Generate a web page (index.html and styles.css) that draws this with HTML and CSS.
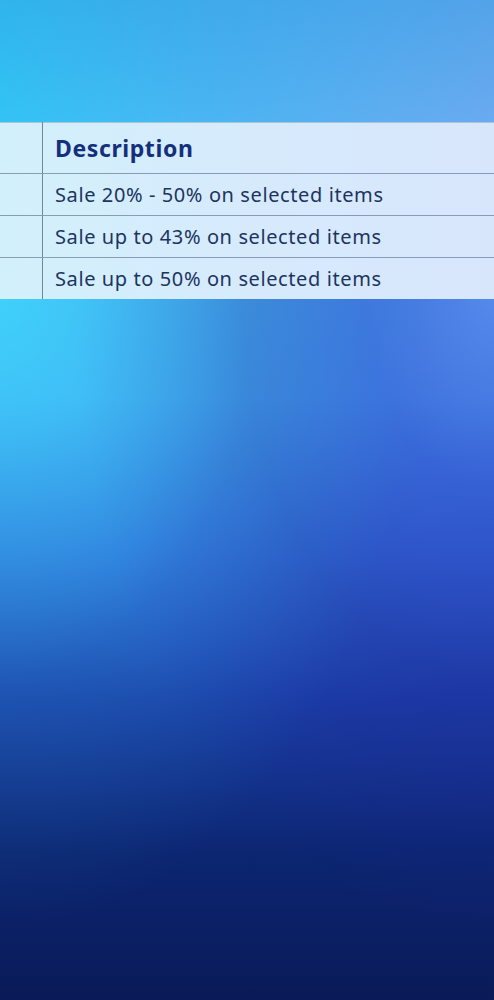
FILE: index.html
```html
<!DOCTYPE html>
<html>
<head>
  <title>Sale</title>
  <link rel="stylesheet" href="styles.css">
</head>
<body>
  <div class="hero"></div>

  <div class="table-wrap">
    <table class="deals">
      <thead>
        <tr>
          <th class="cut"></th>
          <th>Description</th>
        </tr>
      </thead>
      <tbody>
        <tr>
          <td class="cut"></td>
          <td>Sale 20% - 50% on selected items</td>
        </tr>
        <tr>
          <td class="cut"></td>
          <td>Sale up to 43% on selected items</td>
        </tr>
        <tr>
          <td class="cut"></td>
          <td>Sale up to 50% on selected items</td>
        </tr>
      </tbody>
    </table>
  </div>

  <div class="backdrop"></div>
</body>
</html>
```

FILE: styles.css
```css
html, body {
  margin: 0;
  padding: 0;
}
body {
  font-family: 'Noto Sans', Arial, sans-serif;
  background: #0a1a58;
  min-height: 1000px;
}
.hero {
  height: 122px;
  background:
    linear-gradient(180deg, rgba(40,150,220,0.35) 0%, rgba(40,150,220,0) 100%),
    linear-gradient(90deg, #33c4f4 0%, #4cb4f2 45%, #6aaaf0 100%);
}
.table-wrap {
  background: linear-gradient(90deg, #40c8f6 0%, #6aa8f0 100%);
}
.deals {
  width: 100%;
  border-collapse: collapse;
  background: linear-gradient(90deg, #d2f0fc 0%, #d6eafc 50%, #d8e6fb 100%);
}
.deals th,
.deals td {
  text-align: left;
  padding: 0 12px;
  border-bottom: 1px solid #869db3;
  letter-spacing: 0.6px;
}
.deals tr:last-child td {
  border-bottom: none;
}
.deals th {
  height: 50px;
  font-size: 23px;
  font-weight: 700;
  color: #142f7c;
  border-top: 1px solid #a6c4dc;
}
.deals td {
  height: 41px;
  font-size: 20px;
  color: #1d3461;
}
.deals .cut {
  width: 18px;
  border-right: 1px solid #6f879e;
}
/* big fade under the table: cyan glow left, violet shade right */
.backdrop {
  height: 700px;
  background:
    radial-gradient(ellipse 85% 90% at 0% 0%, rgba(60,230,255,0.65) 0%, rgba(60,230,255,0.35) 30%, rgba(60,230,255,0.12) 60%, rgba(60,230,255,0) 100%),
    radial-gradient(ellipse 85% 90% at 100% 0%, rgba(110,90,225,0.4) 0%, rgba(50,40,190,0.4) 30%, rgba(35,30,150,0.3) 60%, rgba(35,30,150,0) 100%),
    linear-gradient(180deg, #45a8f0 0%, #42a2f0 14%, #2f70d8 36%, #1a40a8 57%, #0c2672 79%, #0a1a58 100%);
}
```
